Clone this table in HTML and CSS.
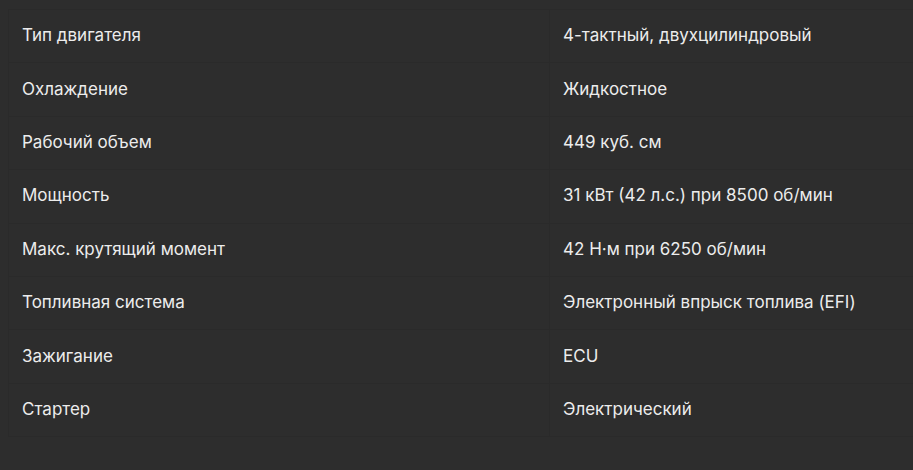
FILE: index.html
```html
<!DOCTYPE html>
<html lang="ru">
<head>
<meta charset="utf-8">
<link rel="stylesheet" href="styles.css">
</head>
<body>
<table class="specs">
  <tbody>
    <tr><td class="name">Тип двигателя</td><td class="value">4-тактный, двухцилиндровый</td></tr>
    <tr><td class="name">Охлаждение</td><td class="value">Жидкостное</td></tr>
    <tr><td class="name">Рабочий объем</td><td class="value">449 куб. см</td></tr>
    <tr><td class="name">Мощность</td><td class="value">31 кВт (42 л.с.) при 8500 об/мин</td></tr>
    <tr><td class="name">Макс. крутящий момент</td><td class="value">42 Н·м при 6250 об/мин</td></tr>
    <tr><td class="name">Топливная система</td><td class="value">Электронный впрыск топлива (EFI)</td></tr>
    <tr><td class="name">Зажигание</td><td class="value">ECU</td></tr>
    <tr><td class="name">Стартер</td><td class="value">Электрический</td></tr>
  </tbody>
</table>
</body>
</html>
```
FILE: styles.css
```css
html, body {
  margin: 0;
  background: #2d2d2d;
}
body {
  padding: 9px 0 0 8px;
  font-family: Inter, "Noto Sans", sans-serif;
  color: #ececec;
}
.specs {
  border-collapse: collapse;
  width: 920px;
}
.specs td {
  border: 1px solid #2a2a2a;
  height: 53.4px;
  box-sizing: border-box;
  padding: 0 13px 2px 13px;
  font-size: 17px;
  line-height: 20px;
  vertical-align: middle;
}
.specs .name {
  width: 541px;
}
```
